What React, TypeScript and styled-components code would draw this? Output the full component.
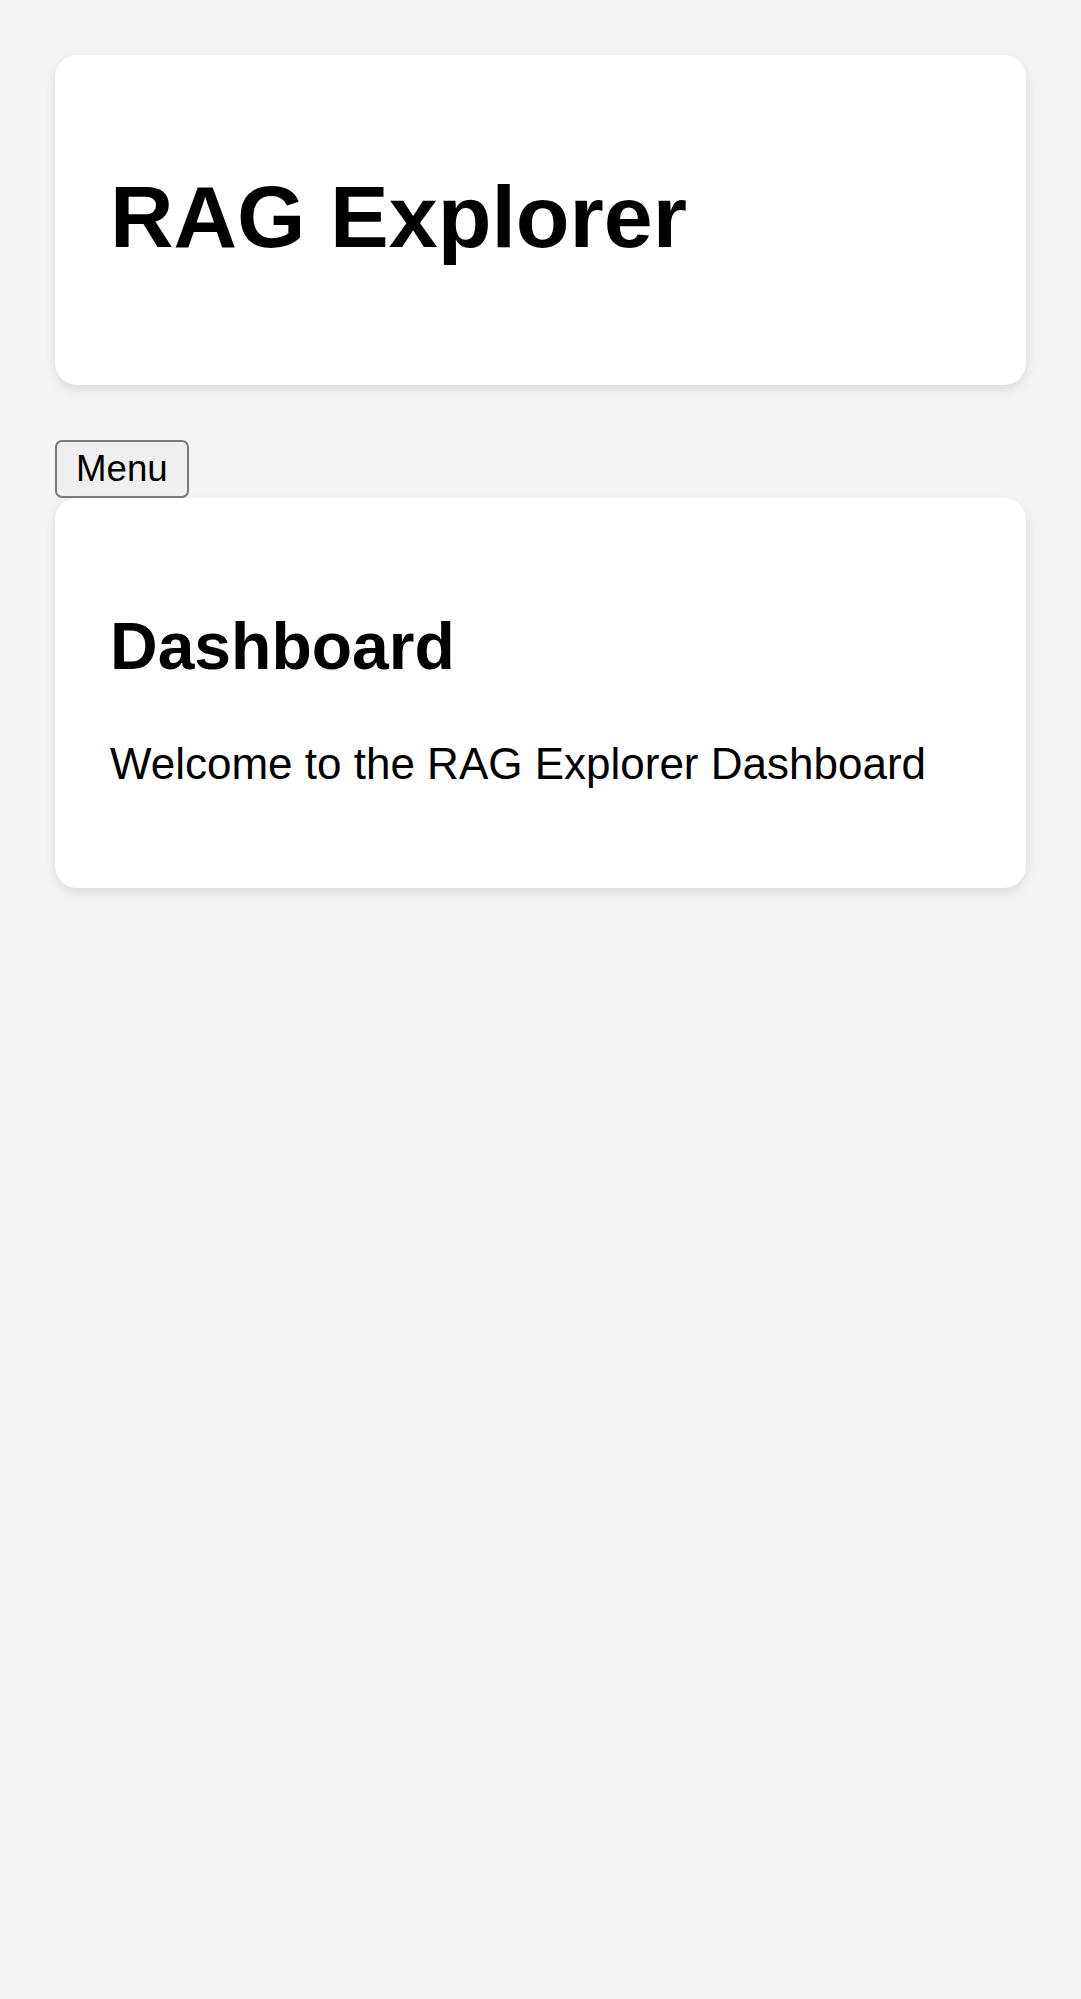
import React from "react";
import styled, { createGlobalStyle } from "styled-components";

const GlobalStyle = createGlobalStyle`
  html, body {
    margin: 0;
    padding: 0;
    background: #f4f4f4;
    font-family: "Liberation Sans", Arial, sans-serif;
    color: #000;
  }
  body {
    min-height: 1999px;
  }
`;

const Page = styled.div`
  padding: 55px;
  display: flex;
  flex-direction: column;
  align-items: stretch;
`;

const Card = styled.section<{ $gapBelow?: boolean }>`
  background: #ffffff;
  border-radius: 22px;
  box-shadow: 0 5px 11px rgba(0, 0, 0, 0.1);
  padding: 55px;
  margin-bottom: ${(p) => (p.$gapBelow ? "55px" : "0")};
  display: flow-root;
`;

const Title = styled.h1`
  font-size: 88px;
  font-weight: 700;
  margin: 56px 0 62px;
  line-height: normal;
`;

const SectionTitle = styled.h2`
  font-size: 66px;
  font-weight: 700;
  margin: 55px 0;
  line-height: normal;
`;

const Text = styled.p`
  font-size: 44px;
  margin: 44px 0;
  line-height: normal;
`;

const MenuButton = styled.button`
  align-self: flex-start;
  box-sizing: border-box;
  height: 58px;
  padding: 0 19px;
  font-family: "Liberation Sans", Arial, sans-serif;
  font-size: 36.7px;
  line-height: 1;
  color: #000;
  background: #efefef;
  border: 2.5px solid #7a7a7a;
  border-radius: 7px;
  cursor: pointer;
`;

export default function App() {
  return (
    <>
      <GlobalStyle />
      <Page>
        <Card $gapBelow>
          <Title>RAG Explorer</Title>
        </Card>
        <MenuButton>Menu</MenuButton>
        <Card>
          <SectionTitle>Dashboard</SectionTitle>
          <Text>Welcome to the RAG Explorer Dashboard</Text>
        </Card>
      </Page>
    </>
  );
}
